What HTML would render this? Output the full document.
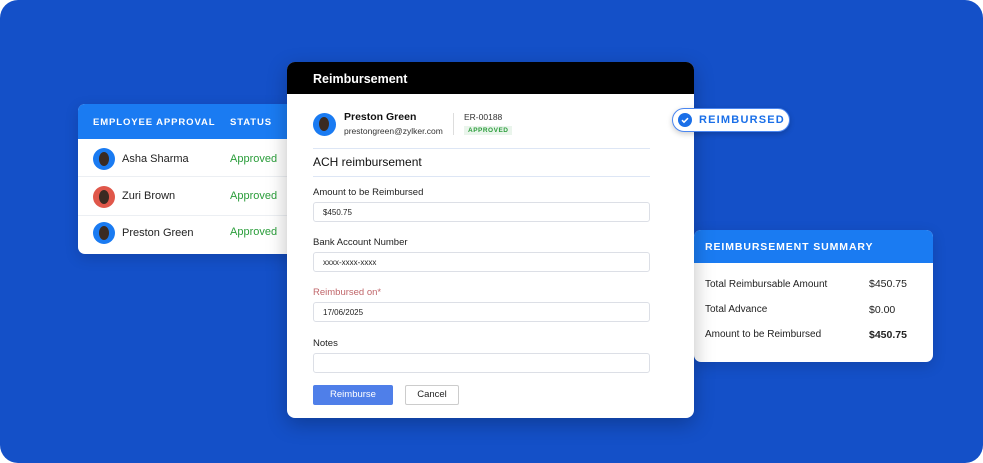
<!DOCTYPE html>
<html><head><style>
*{margin:0;padding:0;box-sizing:border-box}
body{width:983px;height:463px;background:#fff;font-family:"Liberation Sans",sans-serif;position:relative;overflow:hidden}
.bg{position:absolute;left:0;top:0;width:983px;height:463px;background:#1450c8;border-radius:18px}
.card{position:absolute;background:#fff;border-radius:7px;overflow:hidden;box-shadow:0 4px 14px rgba(0,0,0,.15)}
.hd{background:#1a7bf2;color:#fff;font-weight:bold;font-size:9.5px;letter-spacing:.9px}
.av{position:absolute;width:22px;height:22px;border-radius:50%;background:#1a7bf2;overflow:hidden}
.av:after{content:"";position:absolute;left:6px;top:4px;width:10px;height:14px;border-radius:50%;background:#3a2a22}
.row{position:absolute;left:0;width:220px;height:38px;border-bottom:1px solid #eceff3;font-size:11px;color:#222}
.row span{position:absolute}
.ap{color:#2a9d3a;font-size:11px}
.lab{position:absolute;left:26px;font-size:9.5px;color:#222}
.inp{position:absolute;left:26px;width:337px;height:20px;border:1px solid #dcdfe6;border-radius:3px;font-size:8px;padding:5px 9px;color:#222}
.srow{position:absolute;left:11px;font-size:10px;color:#222}
.sval{position:absolute;left:175px;font-size:10.5px;color:#222}
</style></head><body>
<div class="bg"></div>

<div class="card" style="left:78px;top:104px;width:220px;height:150px;border-radius:7px">
 <div class="hd" style="height:35px;position:relative">
  <span style="position:absolute;left:15px;top:13px">EMPLOYEE APPROVAL</span>
  <span style="position:absolute;left:152px;top:13px">STATUS</span>
 </div>
 <div class="row" style="top:35px"><div class="av" style="left:15px;top:9px"></div><span style="left:44px;top:14px">Asha Sharma</span><span class="ap" style="left:152px;top:14px">Approved</span></div>
 <div class="row" style="top:74px"><div class="av" style="left:15px;top:8px;background:#e0574a"></div><span style="left:44px;top:12px">Zuri Brown</span><span class="ap" style="left:152px;top:12px">Approved</span></div>
 <div class="row" style="top:112px;border:none"><div class="av" style="left:15px;top:6px"></div><span style="left:44px;top:11px">Preston Green</span><span class="ap" style="left:152px;top:10px">Approved</span></div>
</div>

<div class="card" style="left:694px;top:230px;width:239px;height:132px">
 <div class="hd" style="height:33px;position:relative;font-size:10.5px"><span style="position:absolute;left:11px;top:11px">REIMBURSEMENT SUMMARY</span></div>
 <div class="srow" style="top:49px">Total Reimbursable Amount</div><div class="sval" style="top:48px">$450.75</div>
 <div class="srow" style="top:74px">Total Advance</div><div class="sval" style="top:74px">$0.00</div>
 <div class="srow" style="top:99px">Amount to be Reimbursed</div><div class="sval" style="top:99px;font-weight:bold">$450.75</div>
</div>

<div class="card" style="left:287px;top:62px;width:407px;height:356px;border-radius:8px;box-shadow:0 6px 20px rgba(0,0,0,.25)">
 <div style="background:#000;height:32px;color:#fff;font-weight:bold;font-size:12.5px;padding:10px 26px">Reimbursement</div>
 <div class="av" style="left:26px;top:51px;width:23px;height:23px"></div>
 <div style="position:absolute;left:57px;top:49px;font-size:10.5px;font-weight:bold;color:#111">Preston Green</div>
 <div style="position:absolute;left:57px;top:64px;font-size:8.5px;color:#333">prestongreen@zylker.com</div>
 <div style="position:absolute;left:166px;top:51px;width:1px;height:22px;background:#ddd"></div>
 <div style="position:absolute;left:177px;top:50px;font-size:8.5px;color:#333">ER-00188</div>
 <div style="position:absolute;left:177px;top:64px;font-size:6.5px;font-weight:bold;color:#2a9d3a;background:#eaf5ec;padding:1px 4px;letter-spacing:.5px">APPROVED</div>
 <div style="position:absolute;left:26px;top:86px;width:337px;height:1px;background:#dde6f5"></div>
 <div style="position:absolute;left:26px;top:93px;font-size:12px;color:#111">ACH reimbursement</div>
 <div style="position:absolute;left:26px;top:114px;width:337px;height:1px;background:#dde6f5"></div>
 <div class="lab" style="top:125px">Amount to be Reimbursed</div>
 <div class="inp" style="top:140px">$450.75</div>
 <div class="lab" style="top:175px">Bank Account Number</div>
 <div class="inp" style="top:190px">xxxx-xxxx-xxxx</div>
 <div class="lab" style="top:225px;color:#c0666a">Reimbursed on*</div>
 <div class="inp" style="top:240px">17/06/2025</div>
 <div class="lab" style="top:276px">Notes</div>
 <div class="inp" style="top:291px"></div>
 <div style="position:absolute;left:26px;top:323px;width:80px;height:20px;background:#4f7fe9;border-radius:2px;color:#fff;font-size:9.5px;text-align:center;line-height:20px">Reimburse</div>
 <div style="position:absolute;left:118px;top:323px;width:54px;height:20px;border:1px solid #ccc;border-radius:2px;color:#222;font-size:9.5px;text-align:center;line-height:18px">Cancel</div>
</div>

<div style="position:absolute;left:672px;top:108px;width:118px;height:24px;background:#fff;border:1.5px solid #4a86f0;border-radius:12px;box-shadow:0 2px 6px rgba(0,0,0,.2)">
 <svg style="position:absolute;left:5px;top:4px" width="14" height="14" viewBox="0 0 14 14"><circle cx="7" cy="7" r="7" fill="#1a6fe8"/><path d="M4 7.2l2 2 4-4" stroke="#fff" stroke-width="1.5" fill="none"/></svg>
 <span style="position:absolute;left:26px;top:5px;font-size:11px;font-weight:bold;color:#1a6fe8;letter-spacing:1.2px">REIMBURSED</span>
</div>
</body></html>
